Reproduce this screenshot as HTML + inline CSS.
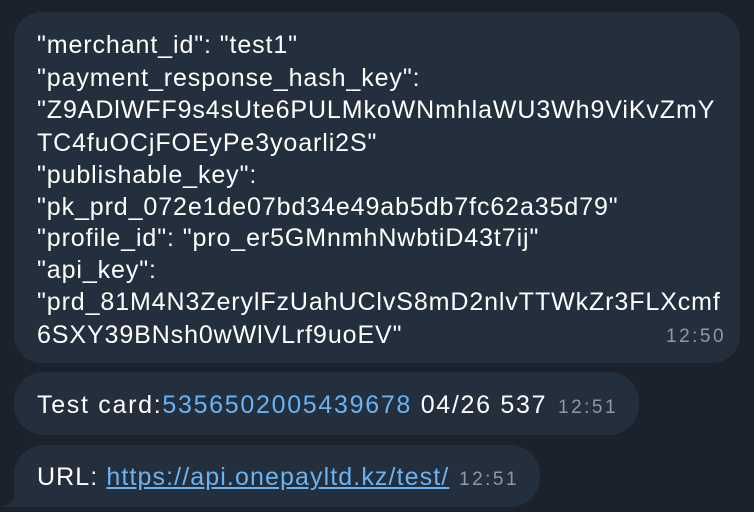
<!DOCTYPE html>
<html><head><meta charset="utf-8"><style>
html,body{margin:0;padding:0;width:754px;height:512px;overflow:hidden;background:#1b222c;font-family:"Liberation Sans",sans-serif;color:#fff}
.b{position:absolute;background:#242f3e;border-radius:28px}
.l{position:absolute;left:37px;font-size:25px;white-space:nowrap;letter-spacing:0.9px;line-height:28px}
.t{position:absolute;color:#8c99a8;font-size:19px;letter-spacing:2.5px;white-space:nowrap}
.a{color:#6ab3f3}
</style></head><body>
<div class="b" style="left:14px;top:12px;width:726px;height:351px"></div>
<div class="l" style="top:31px">"merchant_id": "test1"</div>
<div class="l" style="top:64px">"payment_response_hash_key":</div>
<div class="l" style="top:96px">"Z9ADlWFF9s4sUte6PULMkoWNmhlaWU3Wh9ViKvZmY</div>
<div class="l" style="top:129px">TC4fuOCjFOEyPe3yoarli2S"</div>
<div class="l" style="top:161px">"publishable_key":</div>
<div class="l" style="top:193px">"pk_prd_072e1de07bd34e49ab5db7fc62a35d79"</div>
<div class="l" style="top:224px">"profile_id": "pro_er5GMnmhNwbtiD43t7ij"</div>
<div class="l" style="top:256px">"api_key":</div>
<div class="l" style="top:288px">"prd_81M4N3ZerylFzUahUClvS8mD2nlvTTWkZr3FLXcmf</div>
<div class="l" style="top:321px">6SXY39BNsh0wWlVLrf9uoEV"</div>
<div class="t" style="left:666px;top:326px">12:50</div>
<div class="b" style="left:14px;top:372px;width:625px;height:63px;border-radius:30px"></div>
<div class="l" style="top:391px;letter-spacing:1.7px">Test card:<span class="a">5356502005439678</span> 04/26 537</div>
<div class="t" style="left:558px;top:397px">12:51</div>
<svg style="position:absolute;left:0;top:480px" width="40" height="30"><path d="M2 27 Q14 24 18 10 L30 27 Z" fill="#242f3e"/></svg>
<div class="b" style="left:14px;top:445px;width:526px;height:62px;border-radius:30px 30px 30px 8px"></div>
<div class="l" style="top:463px;letter-spacing:1.1px">URL: <span class="a" style="text-decoration:underline">https://api.onepayltd.kz/test/</span></div>
<div class="t" style="left:459px;top:469px">12:51</div>
</body></html>
